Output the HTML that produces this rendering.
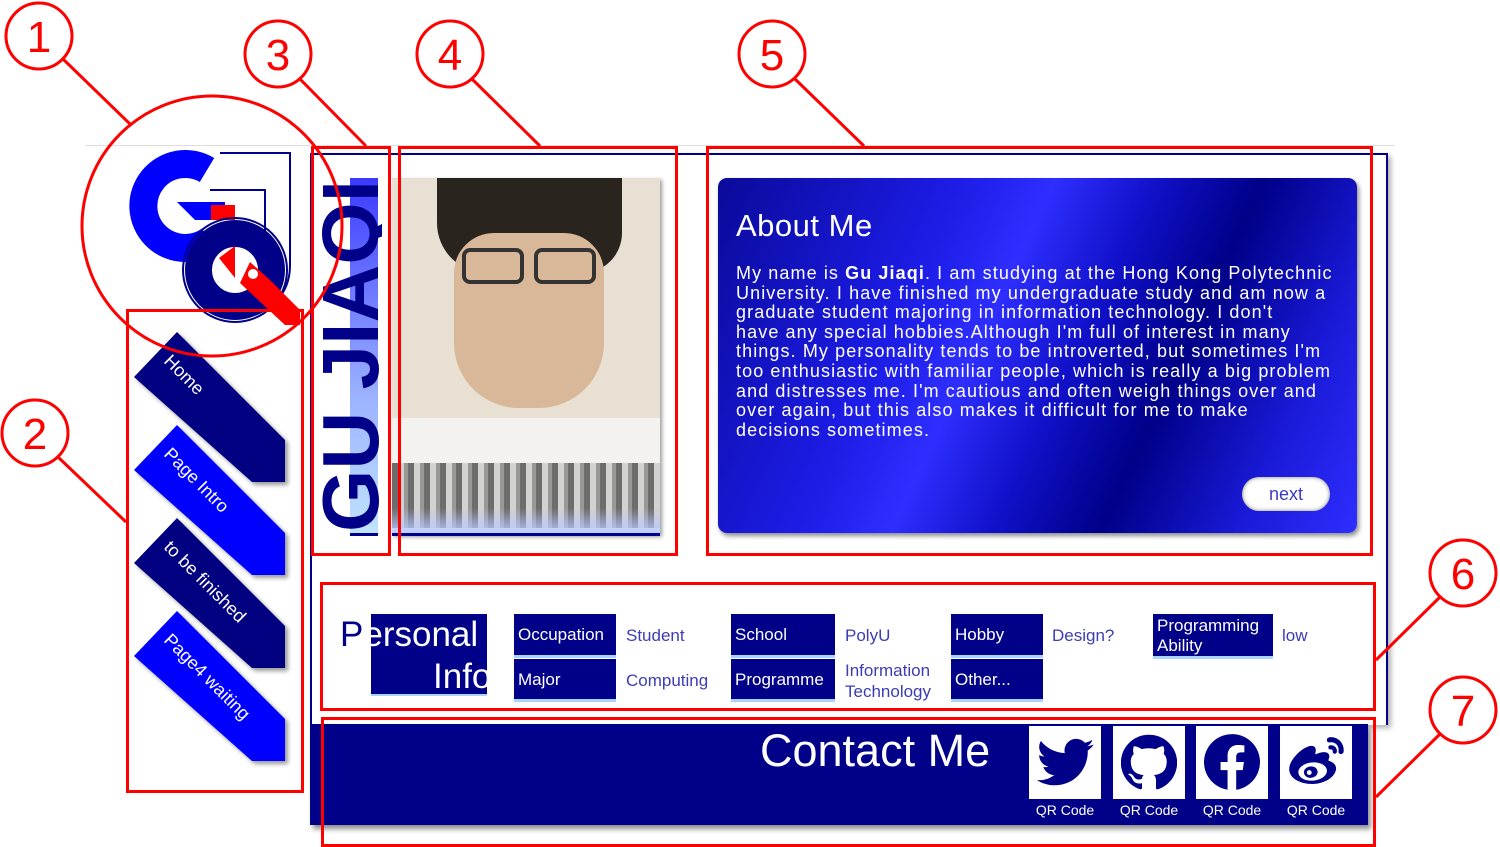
<!DOCTYPE html>
<html><head><meta charset="utf-8"><style>
*{margin:0;padding:0;box-sizing:border-box}
body{width:1500px;height:847px;background:#fff;position:relative;overflow:hidden;font-family:"Liberation Sans",sans-serif}
.a{position:absolute}
.rr{position:absolute;border:3px solid #f00}
.card{position:absolute;left:718px;top:178px;width:639px;height:355px;border-radius:9px;background:linear-gradient(115deg,#0a0a9a 0%,#1c1ce6 30%,#2e2eff 42%,#1010c8 55%,#000088 68%,#1a1ad8 85%,#2e2eff 100%);box-shadow:2px 3px 5px rgba(0,0,0,.45);color:#fff}
.cell{position:absolute;background:#000088;color:#fff;font-size:17px;border-bottom:3px solid #a8d4ff;padding:0 4px;line-height:42px}
.val{position:absolute;color:#3c3cb4;font-size:17px}
.qr{position:absolute;top:725px;width:74px;height:97px;background:#fff;border:1px solid #000088}
.qr .b{position:absolute;left:0;right:0;bottom:0;height:22px;background:#000088;color:#fff;font-size:14px;text-align:center;line-height:22px}
</style></head><body>
<div class="a" style="left:85px;top:145px;width:1310px;height:1px;background:#ddd"></div>
<div class="a" style="left:310px;top:153px;width:1078px;height:572px;border:2px solid #000088;border-bottom:none;box-shadow:3px 3px 5px rgba(0,0,0,.3)"></div>
<div class="a" style="left:310px;top:724px;width:1058px;height:101px;background:#000088;box-shadow:3px 4px 5px rgba(0,0,0,.45)"></div>
<div class="a" style="left:760px;top:724px;color:#fff;font-size:45px;line-height:54px">Contact Me</div>
<div class="qr" style="left:1028px"><svg class="a" style="left:8px;top:12px" width="58" height="50" viewBox="0 0 24 20"><path fill="#000088" d="M23.6 2.3c-.9.4-1.8.6-2.8.8 1-.6 1.800-1.6 2.1-2.7-.9.6-2 1-3.1 1.2C18.9.6 17.6 0 16.2 0c-2.7 0-4.8 2.2-4.8 4.8 0 .4 0 .8.1 1.1C7.4 5.700 3.9 3.8 1.6.9c-.4.7-.7 1.600-.7 2.4 0 1.7.9 3.2 2.2 4-.8 0-1.500-.2-2.2-.6v.1c0 2.3 1.7 4.3 3.9 4.7-.4.1-.8.2-1.3.2-.3 0-.6 0-.9-.1.6 1.9 2.4 3.3 4.5 3.4-1.7 1.3-3.8 2.1-6 2.1-.4 0-.8 0-1.2-.1 2.1 1.4 4.7 2.2 7.4 2.2 8.9 0 13.700-7.4 13.700-13.7v-.6c.9-.7 1.8-1.5 2.4-2.5z"/></svg><div class="b">QR Code</div></div>
<div class="qr" style="left:1112px"><svg class="a" style="left:8px;top:8px" width="56" height="56" viewBox="0 0 24 24"><path fill="#000088" d="M12 .3a12 12 0 0 0-3.8 23.4c.6.1.8-.3.8-.6v-2c-3.3.7-4-1.6-4-1.6-.6-1.4-1.4-1.8-1.4-1.8-1-.7.1-.7.1-.7 1.2.1 1.8 1.2 1.8 1.2 1 1.8 2.8 1.3 3.5 1 0-.8.4-1.3.7-1.6-2.7-.3-5.5-1.3-5.5-6 0-1.2.5-2.3 1.3-3.1-.2-.4-.6-1.6 0-3.2 0 0 1-.3 3.4 1.2a11.5 11.5 0 0 1 6 0c2.3-1.5 3.3-1.2 3.3-1.2.6 1.6.2 2.8.1 3.2.8.8 1.3 1.9 1.3 3.2 0 4.6-2.8 5.6-5.5 5.9.5.4.9 1 .9 2.2v3.3c0 .3.1.7.8.6A12 12 0 0 0 12 .3"/></svg><div class="b">QR Code</div></div>
<div class="qr" style="left:1195px"><svg class="a" style="left:8px;top:8px" width="56" height="56" viewBox="0 0 24 24"><path fill="#000088" d="M24 12a12 12 0 1 0-13.9 11.9v-8.4H7.1V12h3V9.4c0-3 1.8-4.7 4.5-4.7 1.3 0 2.7.2 2.7.2v3h-1.5c-1.5 0-2 .9-2 1.9V12h3.3l-.5 3.5h-2.8v8.4A12 12 0 0 0 24 12z"/></svg><div class="b">QR Code</div></div>
<div class="qr" style="left:1279px"><svg class="a" style="left:8px;top:10px" width="58" height="50" viewBox="0 0 24 20"><path fill="#000088" d="M10 19.5c-5 0-9.5-2.4-9.5-6.1 0-2 1.2-4.2 3.3-6.3C6.6 4.3 9.8 3 11 4.2c.6.6.6 1.5.3 2.6-.2.6.5.3.5.3 2.3-1 4.3-1 5 0 .4.6.4 1.3 0 2.3-.2.4 0 .5.3.6 1.3.4 2.8 1.4 2.8 3.1 0 2.9-4.1 6.4-9.9 6.4zM9.8 10.6c-3.3.3-5.7 2.2-5.5 4.3.2 2.1 3 3.5 6.3 3.2 3.3-.3 5.7-2.2 5.5-4.3-.2-2.1-3-3.5-6.3-3.2zM9 12.3c1.6-.3 3 .6 3.2 1.8.3 1.2-.7 2.5-2.3 2.8-1.6.3-3-.6-3.3-1.9-.2-1.2.8-2.4 2.4-2.7zM17 .2c3.5-.5 6.5 2.5 6 6-.1.7-.8 1-1.3.9-.6-.1-.9-.6-.8-1.2.4-2.2-1.4-4-3.6-3.6-.6.1-1.1-.2-1.2-.8-.1-.6.3-1.1.9-1.3zM17.4 3.5c1.7-.3 3.1 1.1 2.8 2.8-.1.5-.5.8-1 .7-.5-.1-.8-.5-.7-1 .1-.5-.3-.9-.8-.8-.5.1-.9-.2-1-.7-.1-.5.2-.9.7-1z"/><circle cx="8.8" cy="14.8" r="1" fill="#fff"/></svg><div class="b">QR Code</div></div>

<!-- logo -->
<svg class="a" style="left:115px;top:150px" width="190" height="175" viewBox="0 0 190 175">
<path d="M105 3 H175 V115 Q175 150 140 165" fill="none" stroke="#000088" stroke-width="2"/>
<path d="M95 40 H150 V110" fill="none" stroke="#000088" stroke-width="2"/>
<path d="M92 20 A42 42 0 1 0 95 90" fill="none" stroke="#0000ff" stroke-width="28"/>
<polygon points="62,52 110,52 110,70 80,70" fill="#0000ff"/>
<rect x="96" y="55" width="24" height="15" fill="#f00"/>
<circle cx="120" cy="120" r="37" fill="none" stroke="#000088" stroke-width="26"/>
<circle cx="120" cy="120" r="52" fill="none" stroke="#000088" stroke-width="2"/>
<circle cx="120" cy="120" r="24" fill="none" stroke="#000088" stroke-width="2"/>
<path d="M120 96 L120 128 L104 108Z" fill="#f00"/>
<path d="M135 112 L155 130 L185 160 L185 175 L170 175 L125 133Z" fill="#f00"/>
<circle cx="138" cy="124" r="5" fill="#fff"/>
</svg>

<!-- nav ribbons -->
<svg class="a" style="left:125px;top:320px" width="180" height="470">
<defs><filter id="s"><feDropShadow dx="3" dy="3" stdDeviation="2" flood-opacity=".4"/></filter></defs>
<g filter="url(#s)">
<polygon points="9,57 52,12 160,120 160,162 127,162" fill="#000080"/>
<polygon points="9,150 52,105 160,213 160,255 127,255" fill="#0000ff"/>
<polygon points="9,243 52,198 160,306 160,348 127,348" fill="#000080"/>
<polygon points="9,336 52,291 160,399 160,441 127,441" fill="#0000ff"/>
</g>
<g fill="#fff" font-size="18" font-family="Liberation Sans">
<text transform="translate(38,42) rotate(45)">Home</text>
<text transform="translate(38,135) rotate(45)">Page Intro</text>
<text transform="translate(38,228) rotate(45)">to be finished</text>
<text transform="translate(38,321) rotate(45)">Page4 waiting</text>
</g>
</svg>

<!-- vertical name -->
<div class="a" style="left:350px;top:178px;width:28px;height:356px;background:linear-gradient(#3a3aff,#9ab0ff 60%,#c0e4ff)"></div>
<div class="a" style="left:350px;top:533px;width:28px;height:3px;background:#000088"></div>
<svg class="a" style="left:316px;top:175px" width="66" height="362">
<text transform="translate(62,357) rotate(-90)" font-family="Liberation Sans" font-weight="bold" font-size="80" fill="#000088" textLength="352" lengthAdjust="spacingAndGlyphs">GU JIAQI</text>
</svg>

<!-- photo -->
<div class="a" style="left:392px;top:178px;width:268px;height:357px;background:#e9e0d4;box-shadow:2px 2px 4px rgba(0,0,0,.4);overflow:hidden">
<div class="a" style="left:45px;top:0;width:185px;height:95px;background:#2a241f;border-radius:0 0 40px 50px"></div>
<div class="a" style="left:62px;top:55px;width:150px;height:175px;background:#d8b898;border-radius:40px 40px 65px 65px"></div>
<div class="a" style="left:70px;top:70px;width:62px;height:36px;border:4px solid #333;border-radius:8px"></div>
<div class="a" style="left:142px;top:70px;width:62px;height:36px;border:4px solid #333;border-radius:8px"></div>
<div class="a" style="left:0;top:240px;width:268px;height:117px;background:#f4f2ee"></div>
<div class="a" style="left:0;top:285px;width:268px;height:65px;background:repeating-linear-gradient(90deg,#555 0 6px,#ccc 6px 12px,#888 12px 16px);opacity:.85"></div>
<div class="a" style="left:0;top:330px;width:268px;height:27px;background:linear-gradient(transparent,#b8c8ff)"></div>
</div>
<div class="a" style="left:392px;top:533px;width:268px;height:3px;background:#000088"></div>

<!-- about -->
<div class="card">
<div class="a" style="left:18px;top:30px;font-size:31px;letter-spacing:.5px">About Me</div>
<div class="a" style="left:18px;top:86px;font-size:18px;letter-spacing:1.1px;line-height:19.6px;white-space:nowrap">My name is <b>Gu Jiaqi</b>. I am studying at the Hong Kong Polytechnic<br>University. I have finished my undergraduate study and am now a<br>graduate student majoring in information technology. I don't<br>have any special hobbies.Although I'm full of interest in many<br>things. My personality tends to be introverted, but sometimes I'm<br>too enthusiastic with familiar people, which is really a big problem<br>and distresses me. I'm cautious and often weigh things over and<br>over again, but this also makes it difficult for me to make<br>decisions sometimes.</div>
<div class="a" style="left:524px;top:299px;width:88px;height:34px;border-radius:17px;background:#fff;box-shadow:0 0 4px rgba(0,0,0,.5) inset;color:#3a3ac0;font-size:18px;text-align:center;line-height:34px">next</div>
</div>

<!-- personal info -->
<div class="a" style="left:371px;top:614px;width:116px;height:82px;background:#000088;border-bottom:2px solid #a8d4ff"></div>
<div class="a" style="left:340px;top:614px;font-size:35px;color:#000088;line-height:42px">P<span style="color:#fff">ersonal</span></div>
<div class="a" style="left:433px;top:656px;font-size:35px;color:#fff;line-height:42px">Inf<span style="color:#fff">o</span></div>
<div class="cell" style="left:514px;top:614px;width:102px;height:44px">Occupation</div>
<div class="cell" style="left:514px;top:659px;width:102px;height:43px">Major</div>
<div class="val" style="left:626px;top:626px">Student</div>
<div class="val" style="left:626px;top:671px">Computing</div>
<div class="cell" style="left:731px;top:614px;width:104px;height:44px">School</div>
<div class="cell" style="left:731px;top:659px;width:104px;height:43px">Programme</div>
<div class="val" style="left:845px;top:626px">PolyU</div>
<div class="val" style="left:845px;top:660px;line-height:21px">Information<br>Technology</div>
<div class="cell" style="left:951px;top:614px;width:92px;height:44px">Hobby</div>
<div class="cell" style="left:951px;top:659px;width:92px;height:43px">Other...</div>
<div class="val" style="left:1052px;top:626px">Design?</div>
<div class="cell" style="left:1153px;top:614px;width:120px;height:45px;line-height:20px;padding-top:2px">Programming<br>Ability</div>
<div class="val" style="left:1282px;top:626px">low</div>

<!-- annotations -->
<div class="rr" style="left:126px;top:309px;width:178px;height:484px"></div>
<div class="rr" style="left:311px;top:146px;width:80px;height:410px"></div>
<div class="rr" style="left:398px;top:146px;width:280px;height:410px"></div>
<div class="rr" style="left:706px;top:146px;width:667px;height:410px"></div>
<div class="rr" style="left:320px;top:582px;width:1056px;height:129px"></div>
<div class="rr" style="left:321px;top:717px;width:1055px;height:130px"></div>
<svg class="a" style="left:0;top:0" width="1500" height="847">
<g fill="none" stroke="#f00" stroke-width="3">
<circle cx="212" cy="226" r="130"/>
<circle cx="39" cy="36" r="33"/><line x1="63" y1="59" x2="130" y2="124"/>
<circle cx="278" cy="54" r="33"/><line x1="300" y1="79" x2="366" y2="146"/>
<circle cx="450" cy="54" r="33"/><line x1="472" y1="79" x2="540" y2="146"/>
<circle cx="772" cy="54" r="33"/><line x1="795" y1="79" x2="864" y2="146"/>
<circle cx="35" cy="433" r="33"/><line x1="58" y1="457" x2="126" y2="522"/>
<circle cx="1463" cy="573" r="33"/><line x1="1440" y1="597" x2="1376" y2="660"/>
<circle cx="1463" cy="710" r="33"/><line x1="1440" y1="734" x2="1376" y2="797"/>
</g>
<g fill="#f00" font-size="44" font-family="Liberation Sans" text-anchor="middle">
<text x="39" y="52">1</text><text x="278" y="70">3</text><text x="450" y="70">4</text><text x="772" y="70">5</text>
<text x="35" y="449">2</text><text x="1463" y="589">6</text><text x="1463" y="726">7</text>
</g>
</svg>
</body></html>
